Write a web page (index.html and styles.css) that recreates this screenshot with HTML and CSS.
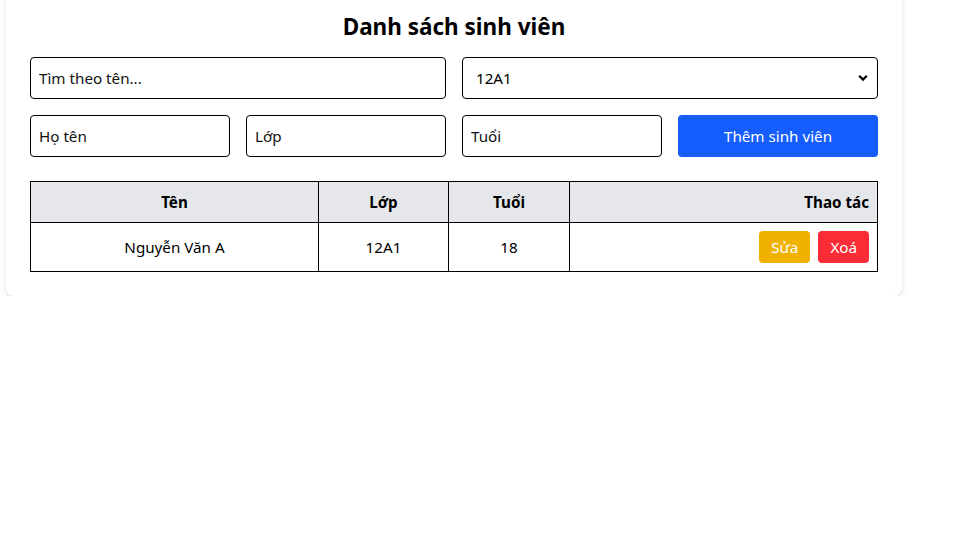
FILE: index.html
```html
<!DOCTYPE html>
<html lang="vi">
<head>
<meta charset="utf-8">
<title>Danh sách sinh viên</title>
<link rel="stylesheet" href="styles.css">
</head>
<body>
<div class="card">
  <h2 class="title">Danh sách sinh viên</h2>
  <div class="row-2">
    <input class="field" type="text" placeholder="Tìm theo tên...">
    <div class="select-wrap">
      <select class="field select">
        <option>12A1</option>
      </select>
      <svg class="chev" width="10" height="8" viewBox="0 0 10 8"><path d="M1.2 1.8 L5 5.6 L8.8 1.8" fill="none" stroke="#000" stroke-width="2.2"/></svg>
    </div>
  </div>
  <div class="row-4">
    <input class="field" type="text" placeholder="Họ tên">
    <input class="field" type="text" placeholder="Lớp">
    <input class="field" type="text" placeholder="Tuổi">
    <button class="btn-add">Thêm sinh viên</button>
  </div>
  <table class="tbl">
    <colgroup>
      <col class="c1"><col class="c2"><col class="c3"><col class="c4">
    </colgroup>
    <thead>
      <tr><th>Tên</th><th>Lớp</th><th>Tuổi</th><th class="right">Thao tác</th></tr>
    </thead>
    <tbody>
      <tr>
        <td>Nguyễn Văn A</td>
        <td>12A1</td>
        <td>18</td>
        <td class="right">
          <div class="actions">
            <button class="btn btn-edit">Sửa</button>
            <button class="btn btn-del">Xoá</button>
          </div>
        </td>
      </tr>
    </tbody>
  </table>
</div>
</body>
</html>
```

FILE: styles.css
```css
* { box-sizing: border-box; }
html, body { margin: 0; padding: 0; background: #fff; }
body {
  font-family: "Noto Sans", "Open Sans", sans-serif;
  font-size: 15.2px;
  color: #000;
  padding-left: 6px;
}
.card {
  width: 896px;
  margin-top: -13px;
  padding: 24px;
  background: #fff;
  border-radius: 8px;
  box-shadow: 0 2px 6px rgba(0,0,0,0.10), 0 1px 2px rgba(0,0,0,0.06);
}
.title {
  margin: 0 0 14px;
  text-align: center;
  font-size: 22.5px;
  line-height: 32px;
  font-weight: 700;
}
.row-2 {
  display: grid;
  grid-template-columns: 1fr 1fr;
  gap: 16px;
  margin-bottom: 16px;
}
.row-4 {
  display: grid;
  grid-template-columns: repeat(4, 1fr);
  gap: 16px;
  margin-bottom: 24px;
}
.field {
  display: block;
  width: 100%;
  height: 42px;
  border: 1px solid #000;
  border-radius: 4px;
  padding: 0 8px;
  font-family: inherit;
  font-size: 15.2px;
  color: #000;
  background: #fff;
  outline: none;
}
.field::placeholder { color: #111; opacity: 1; }
.select-wrap { position: relative; }
.select {
  appearance: none;
  -webkit-appearance: none;
  padding-left: 13px;
}
.chev {
  position: absolute;
  right: 10px;
  top: 17px;
  pointer-events: none;
}
.btn-add {
  height: 42px;
  border: 0;
  border-radius: 4px;
  background: #155dfc;
  color: #fff;
  font-family: inherit;
  font-size: 15.2px;
}
.tbl {
  width: 100%;
  border-collapse: collapse;
  table-layout: fixed;
}
.c1 { width: 288px; }
.c2 { width: 130px; }
.c3 { width: 121px; }
.tbl th, .tbl td {
  border: 1px solid #000;
  padding: 8px;
  text-align: center;
  line-height: 24px;
}
.tbl th { background: #e5e7eb; font-weight: 700; }
.tbl th.right, .tbl td.right { text-align: right; }
.actions {
  display: flex;
  justify-content: flex-end;
  gap: 8px;
}
.btn {
  height: 32px;
  padding: 0 12px;
  border: 0;
  border-radius: 4px;
  color: #fff;
  font-family: inherit;
  font-size: 15.2px;
}
.btn-edit { background: #f0b100; }
.btn-del { background: #fb2c36; }
```
